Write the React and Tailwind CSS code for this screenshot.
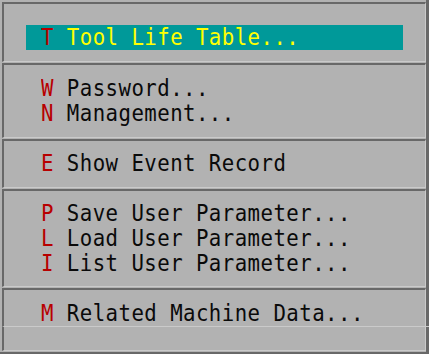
import React from "react";

const groups = [
  { pt: "pt-[21px]", pb: "pb-[11px]", items: [{ key: "T", label: "Tool Life Table...", active: true }] },
  {
    pt: "pt-[11px]",
    pb: "pb-[11px]",
    items: [
      { key: "W", label: "Password..." },
      { key: "N", label: "Management..." },
    ],
  },
  { pt: "pt-[10px]", pb: "pb-[11px]", items: [{ key: "E", label: "Show Event Record" }] },
  {
    pt: "pt-[10px]",
    pb: "pb-[10px]",
    items: [
      { key: "P", label: "Save User Parameter..." },
      { key: "L", label: "Load User Parameter..." },
      { key: "I", label: "List User Parameter..." },
    ],
  },
];

function Row({ k, label, active }) {
  const text = (
    <span className="inline-block origin-left scale-x-[0.9] tracking-[0.5px] whitespace-pre">
      <span className="text-[#b80000]">{k}</span>
      <span className={active ? "text-[#ffff00]" : "text-[#0a0a0a]"}>{" " + label}</span>
    </span>
  );
  if (active) {
    return (
      <div className="h-[25px] leading-[25px] ml-[22px] w-[377px] pl-[15px] bg-[#009999]">{text}</div>
    );
  }
  return <div className="h-[25px] leading-[25px] pl-[37px]">{text}</div>;
}

export default function App() {
  return (
    <div
      className="w-[429px] h-[354px] bg-[#b2b2b2] flex overflow-hidden text-[23px]"
      style={{ fontFamily: '"DejaVu Sans Mono", monospace' }}
    >
      <div className="w-[426px] flex flex-col pt-[2px] pl-[2px]">
        {groups.map((g, i) => (
          <div
            key={i}
            className={`border-t-2 border-l-2 border-b border-r border-t-[#686868] border-l-[#686868] border-b-[#cacaca] border-r-[#cacaca] mb-px ${g.pt} ${g.pb}`}
          >
            {g.items.map((it) => (
              <Row key={it.key} k={it.key} label={it.label} active={it.active} />
            ))}
          </div>
        ))}
        <div className="border-t-2 border-l-2 border-b border-r border-t-[#686868] border-l-[#686868] border-b-[#cacaca] border-r-[#cacaca] pt-[11px]">
          <Row k="M" label="Related Machine Data..." />
        </div>
        <div className="h-[24px] border-l-2 border-b border-r border-l-[#686868] border-b-[#cacaca] border-r-[#cacaca] mb-px" />
        <div className="h-[2px] bg-[#686868] -ml-[2px]" />
      </div>
      <div className="w-[3px] bg-[#686868] flex flex-col">
        <div className="h-[326px]" />
        <div className="h-px bg-[#cacaca]" />
      </div>
    </div>
  );
}
